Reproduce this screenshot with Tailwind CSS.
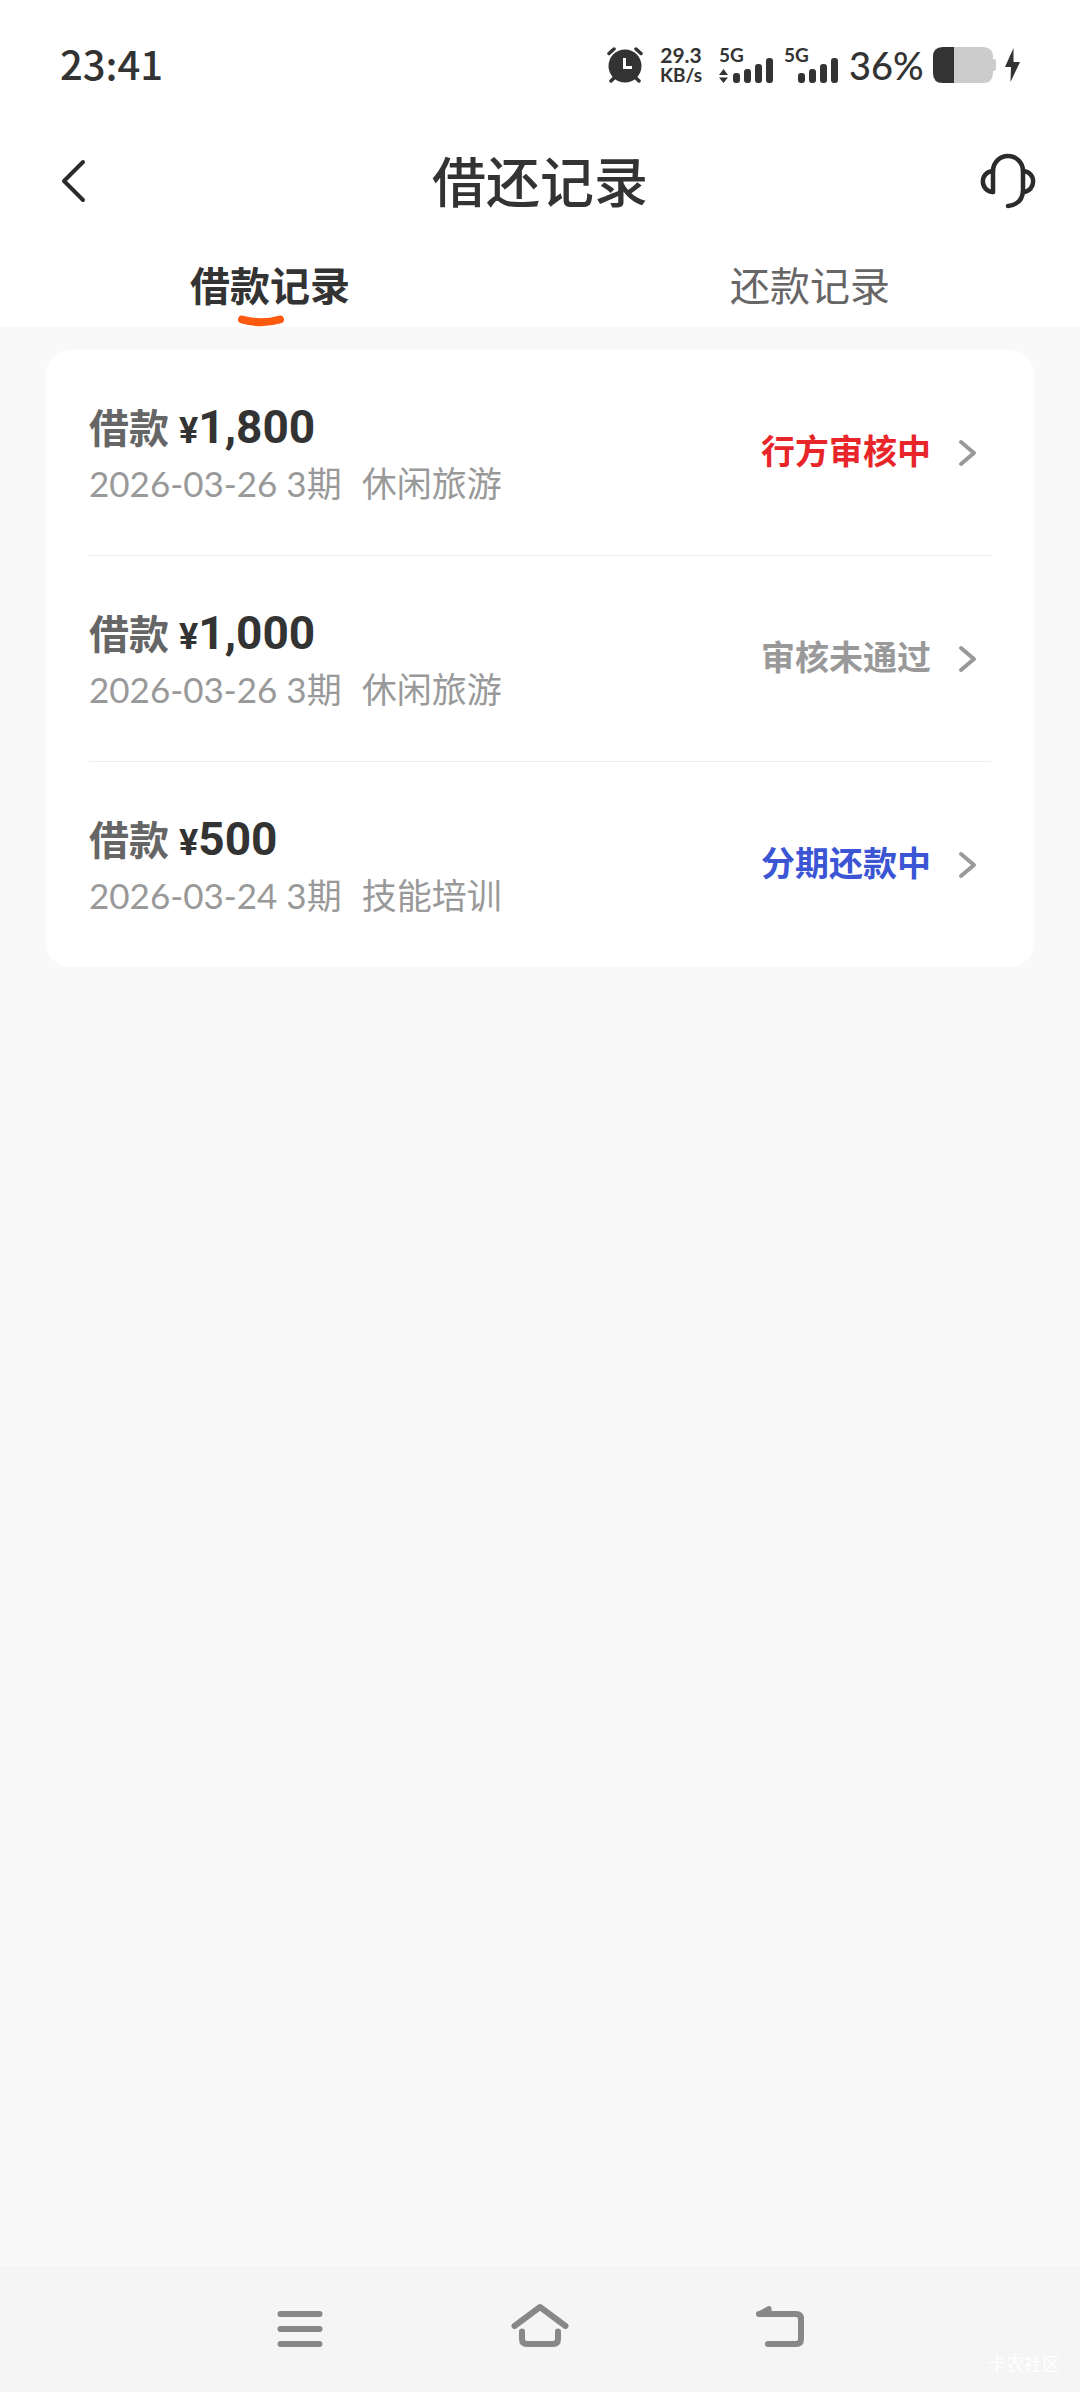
<!DOCTYPE html>
<html lang="zh-CN">
<head>
    <meta charset="UTF-8">
    <meta name="viewport" content="width=device-width, initial-scale=1.0">
    <title>借还记录</title>
    <script src="https://cdn.jsdelivr.net/npm/@tailwindcss/browser@4"></script>
</head>
<body class="min-h-screen flex flex-col bg-[#f9f9f9] text-[#333] font-['Lato','Noto_Sans_CJK_SC',sans-serif]">
    <header class="bg-white">
        <!-- 状态栏 -->
        <div class="flex items-center justify-between h-[130px] px-[60px]">
            <span class="pb-1 text-[40px] leading-10 font-medium font-['Noto_Sans_CJK_SC',sans-serif]">23:41</span>
            <div class="flex items-center">
                <svg class="w-9 h-9" viewBox="0 0 36 36" fill="none" stroke="#333" stroke-linecap="round">
                    <circle cx="18" cy="19" r="16.500" fill="#333" stroke="none"/>
                    <path d="M2 6.500L7 2M34 6.500L29 2M7 31L4 34M29 31L32 34" stroke-width="3.500"/>
                    <path d="M17.500 11V20.500H25" stroke="#fff" stroke-width="3" stroke-linecap="butt"/>
                </svg>
                <div class="ml-4 w-[44px] text-center text-[21px] leading-5 font-bold">
                    <div>29.3</div>
                    <div class="text-[19px]">KB/s</div>
                </div>
                <div class="relative ml-4 w-[55px] h-9">
                    <span class="absolute left-0 top-0 text-[19px] leading-4 font-bold">5G</span>
                    <svg class="w-full h-full" viewBox="0 0 55 36" fill="#333">
                        <path d="M0 28L4.500 22L9 28ZM0 30.500H9L4.500 36Z"/>
                        <rect x="14" y="26" width="7" height="10" rx="3"/>
                        <rect x="25" y="22" width="7" height="14" rx="3"/>
                        <rect x="36" y="17" width="7" height="19" rx="3"/>
                        <rect x="47" y="11" width="7" height="25" rx="3"/>
                    </svg>
                </div>
                <div class="relative ml-[10px] w-[55px] h-9">
                    <span class="absolute left-0 top-0 text-[19px] leading-4 font-bold">5G</span>
                    <svg class="w-full h-full" viewBox="0 0 55 36" fill="#333">
                        <rect x="14" y="26" width="7" height="10" rx="3"/>
                        <rect x="25" y="22" width="7" height="14" rx="3"/>
                        <rect x="36" y="17" width="7" height="19" rx="3"/>
                        <rect x="47" y="11" width="7" height="25" rx="3"/>
                    </svg>
                </div>
                <span class="ml-[10px] w-[76px] text-[38px] leading-9 font-medium">36%</span>
                <svg class="ml-2 w-[64px] h-9" viewBox="0 0 64 36">
                    <path d="M10 0H50Q60 0 60 10V12H61Q63 12 63 15V21Q63 24 61 24H60V26Q60 36 50 36H10Q0 36 0 26V10Q0 0 10 0Z" fill="#ccc"/>
                    <path d="M10 0H21V36H10Q0 36 0 26V10Q0 0 10 0Z" fill="#333"/>
                </svg>
                <svg class="ml-2 w-[15px] h-[34px]" viewBox="0 0 15 34" fill="#333">
                    <path d="M8.500 0L0 19H6L5.500 34L15 14H8.500Z"/>
                </svg>
            </div>
        </div>

        <!-- 标题栏 -->
        <div class="grid grid-cols-[1fr_auto_1fr] items-center h-[102px] px-[44px]">
            <button type="button" aria-label="返回" class="justify-self-start pl-4">
                <svg class="w-7 h-11" viewBox="0 0 28 44" fill="none" stroke="#2b2b2b" stroke-width="4" stroke-linecap="round" stroke-linejoin="round">
                    <path d="M23 3L4 22L23 41"/>
                </svg>
            </button>
            <h1 class="pt-1 text-[54px] leading-[60px] font-medium">借还记录</h1>
            <button type="button" aria-label="客服" class="justify-self-end">
                <svg class="w-[56px] h-[56px]" viewBox="0 0 56 56" fill="none" stroke="#2b2b2b" stroke-width="4.500" stroke-linecap="round" stroke-linejoin="round">
                    <path d="M13 39V18A15 15 0 0 1 43 18V37Q43 51 28 53"/>
                    <path d="M13 18C-0.500 19 -0.500 38 13 39M43 18C56.500 19 56.500 38 43 39"/>
                </svg>
            </button>
        </div>

        <!-- 标签页 -->
        <div class="grid grid-cols-2 h-[95px]" role="tablist">
            <button type="button" role="tab" aria-selected="true" class="relative flex justify-center pt-7 text-[40px] leading-[52px] font-bold">
                借款记录
                <svg class="absolute bottom-0 left-[44%] w-[46px] h-3" viewBox="0 0 46 12" fill="none" stroke="#fd5a10" stroke-width="8" stroke-linecap="round">
                    <path d="M4 4.500Q23 10 42 4.500"/>
                </svg>
            </button>
            <button type="button" role="tab" aria-selected="false" class="flex justify-center pt-7 text-[40px] leading-[52px] text-[#666]">还款记录</button>
        </div>
    </header>

    <main class="flex-1 px-[46px] pt-[23px]">
        <ul class="bg-white rounded-3xl px-[43px] divide-y divide-[#eee]">
            <li>
                <a href="#" class="flex items-center justify-between h-[205px] pr-[14px]">
                    <div>
                        <p class="flex items-baseline text-[40px] leading-[56px] font-bold">
                            <span class="text-[#666]">借款</span>
                            <span class="ml-[10px] text-[36px] font-['Roboto',sans-serif]">¥</span>
                            <span class="text-[46px] font-['Roboto',sans-serif]">1,800</span>
                        </p>
                        <p class="flex gap-5 text-[35px] leading-[48px] text-[#999]"><span>2026-03-26 3期</span><span>休闲旅游</span></p>
                    </div>
                    <div class="flex items-center gap-[26px]">
                        <span class="pb-1 text-[34px] leading-[52px] font-bold text-[#e8262a]">行方审核中</span>
                        <svg class="w-5 h-7" viewBox="0 0 20 28" fill="none" stroke="#999" stroke-width="4" stroke-linecap="round" stroke-linejoin="round"><path d="M4 3L17 14L4 25"/></svg>
                    </div>
                </a>
            </li>
            <li>
                <a href="#" class="flex items-center justify-between h-[205px] pr-[14px]">
                    <div>
                        <p class="flex items-baseline text-[40px] leading-[56px] font-bold">
                            <span class="text-[#666]">借款</span>
                            <span class="ml-[10px] text-[36px] font-['Roboto',sans-serif]">¥</span>
                            <span class="text-[46px] font-['Roboto',sans-serif]">1,000</span>
                        </p>
                        <p class="flex gap-5 text-[35px] leading-[48px] text-[#999]"><span>2026-03-26 3期</span><span>休闲旅游</span></p>
                    </div>
                    <div class="flex items-center gap-[26px]">
                        <span class="pb-1 text-[34px] leading-[52px] font-bold text-[#999]">审核未通过</span>
                        <svg class="w-5 h-7" viewBox="0 0 20 28" fill="none" stroke="#999" stroke-width="4" stroke-linecap="round" stroke-linejoin="round"><path d="M4 3L17 14L4 25"/></svg>
                    </div>
                </a>
            </li>
            <li>
                <a href="#" class="flex items-center justify-between h-[205px] pr-[14px]">
                    <div>
                        <p class="flex items-baseline text-[40px] leading-[56px] font-bold">
                            <span class="text-[#666]">借款</span>
                            <span class="ml-[10px] text-[36px] font-['Roboto',sans-serif]">¥</span>
                            <span class="text-[46px] font-['Roboto',sans-serif]">500</span>
                        </p>
                        <p class="flex gap-5 text-[35px] leading-[48px] text-[#999]"><span>2026-03-24 3期</span><span>技能培训</span></p>
                    </div>
                    <div class="flex items-center gap-[26px]">
                        <span class="pb-1 text-[34px] leading-[52px] font-bold text-[#3b55d4]">分期还款中</span>
                        <svg class="w-5 h-7" viewBox="0 0 20 28" fill="none" stroke="#999" stroke-width="4" stroke-linecap="round" stroke-linejoin="round"><path d="M4 3L17 14L4 25"/></svg>
                    </div>
                </a>
            </li>
        </ul>
    </main>

    <!-- 系统导航 -->
    <nav class="relative h-[126px] bg-[#f5f5f5]">
        <div class="mx-auto w-2/3 h-full grid grid-cols-3 place-items-center">
            <button type="button" aria-label="最近任务">
                <svg class="w-[60px] h-[52px]" viewBox="0 -4 60 52" fill="none" stroke="#888" stroke-width="6" stroke-linecap="round"><path d="M10.500 7H49.500M10.500 22H49.500M10.500 37H49.500"/></svg>
            </button>
            <button type="button" aria-label="主屏幕">
                <svg class="w-[60px] h-[52px]" viewBox="0 -4 60 52" fill="none" stroke="#888" stroke-width="6" stroke-linecap="round" stroke-linejoin="round"><path d="M4.500 19L30 0L55.500 19M12 24.500V32Q12 37 17 37H43Q48 37 48 32V24.500"/></svg>
            </button>
            <button type="button" aria-label="返回上一页">
                <svg class="w-[60px] h-[52px]" viewBox="0 -4 60 52" fill="none" stroke="#888" stroke-width="6" stroke-linecap="round" stroke-linejoin="round"><path d="M18 37H46Q51 37 51 32V12Q51 7 46 7H9"/><path d="M9 7L19 1.500V7Z" stroke-width="5"/></svg>
            </button>
        </div>
        <span class="absolute right-5 bottom-4 text-[18px] leading-6 text-white">卡农社区</span>
    </nav>
</body>
</html>
